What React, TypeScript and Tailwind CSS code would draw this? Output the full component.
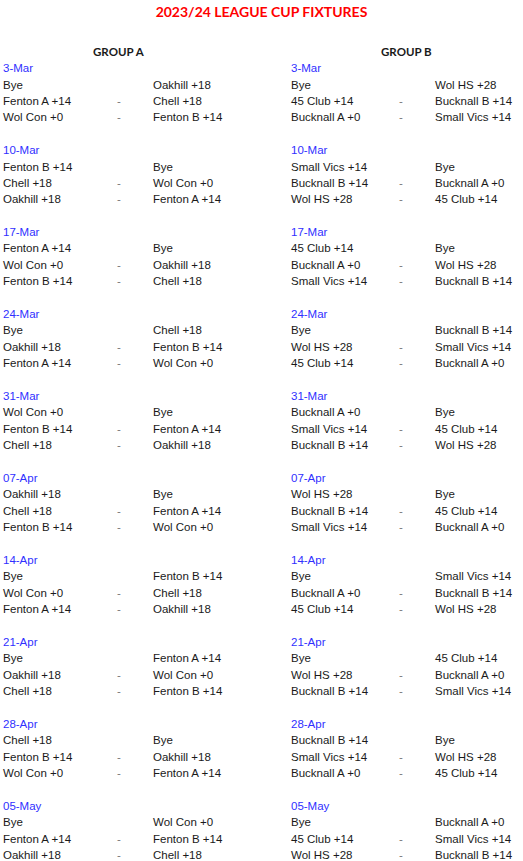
type Fixture = [string, string, string];
type Block = { date: string; rows: Fixture[] };

const groupA: Block[] = [
  { date: "3-Mar", rows: [["Bye", "", "Oakhill +18"], ["Fenton A +14", "-", "Chell +18"], ["Wol Con +0", "-", "Fenton B +14"]] },
  { date: "10-Mar", rows: [["Fenton B +14", "", "Bye"], ["Chell +18", "-", "Wol Con +0"], ["Oakhill +18", "-", "Fenton A +14"]] },
  { date: "17-Mar", rows: [["Fenton A +14", "", "Bye"], ["Wol Con +0", "-", "Oakhill +18"], ["Fenton B +14", "-", "Chell +18"]] },
  { date: "24-Mar", rows: [["Bye", "", "Chell +18"], ["Oakhill +18", "-", "Fenton B +14"], ["Fenton A +14", "-", "Wol Con +0"]] },
  { date: "31-Mar", rows: [["Wol Con +0", "", "Bye"], ["Fenton B +14", "-", "Fenton A +14"], ["Chell +18", "-", "Oakhill +18"]] },
  { date: "07-Apr", rows: [["Oakhill +18", "", "Bye"], ["Chell +18", "-", "Fenton A +14"], ["Fenton B +14", "-", "Wol Con +0"]] },
  { date: "14-Apr", rows: [["Bye", "", "Fenton B +14"], ["Wol Con +0", "-", "Chell +18"], ["Fenton A +14", "-", "Oakhill +18"]] },
  { date: "21-Apr", rows: [["Bye", "", "Fenton A +14"], ["Oakhill +18", "-", "Wol Con +0"], ["Chell +18", "-", "Fenton B +14"]] },
  { date: "28-Apr", rows: [["Chell +18", "", "Bye"], ["Fenton B +14", "-", "Oakhill +18"], ["Wol Con +0", "-", "Fenton A +14"]] },
  { date: "05-May", rows: [["Bye", "", "Wol Con +0"], ["Fenton A +14", "-", "Fenton B +14"], ["Oakhill +18", "-", "Chell +18"]] },
];

const groupB: Block[] = [
  { date: "3-Mar", rows: [["Bye", "", "Wol HS +28"], ["45 Club +14", "-", "Bucknall B +14"], ["Bucknall A +0", "-", "Small Vics +14"]] },
  { date: "10-Mar", rows: [["Small Vics +14", "", "Bye"], ["Bucknall B +14", "-", "Bucknall A +0"], ["Wol HS +28", "-", "45 Club +14"]] },
  { date: "17-Mar", rows: [["45 Club +14", "", "Bye"], ["Bucknall A +0", "-", "Wol HS +28"], ["Small Vics +14", "-", "Bucknall B +14"]] },
  { date: "24-Mar", rows: [["Bye", "", "Bucknall B +14"], ["Wol HS +28", "-", "Small Vics +14"], ["45 Club +14", "-", "Bucknall A +0"]] },
  { date: "31-Mar", rows: [["Bucknall A +0", "", "Bye"], ["Small Vics +14", "-", "45 Club +14"], ["Bucknall B +14", "-", "Wol HS +28"]] },
  { date: "07-Apr", rows: [["Wol HS +28", "", "Bye"], ["Bucknall B +14", "-", "45 Club +14"], ["Small Vics +14", "-", "Bucknall A +0"]] },
  { date: "14-Apr", rows: [["Bye", "", "Small Vics +14"], ["Bucknall A +0", "-", "Bucknall B +14"], ["45 Club +14", "-", "Wol HS +28"]] },
  { date: "21-Apr", rows: [["Bye", "", "45 Club +14"], ["Wol HS +28", "-", "Bucknall A +0"], ["Bucknall B +14", "-", "Small Vics +14"]] },
  { date: "28-Apr", rows: [["Bucknall B +14", "", "Bye"], ["Small Vics +14", "-", "Wol HS +28"], ["Bucknall A +0", "-", "45 Club +14"]] },
  { date: "05-May", rows: [["Bye", "", "Bucknall A +0"], ["45 Club +14", "-", "Small Vics +14"], ["Wol HS +28", "-", "Bucknall B +14"]] },
];

function Group({ title, blocks, cols }: { title: string; blocks: Block[]; cols: string }) {
  return (
    <div className="flex flex-col">
      <div className="h-[16.4px] pl-[90px] font-['Lato',sans-serif] text-[11.5px] font-bold leading-[16.4px] text-[#1a1a1a]">
        {title}
      </div>
      {blocks.map((b) => (
        <div key={b.date} className="flex flex-col">
          <div className="h-[16.4px] leading-[16.4px] text-[#3030ff]">{b.date}</div>
          {b.rows.map((r, i) => (
            <div key={i} className={`grid h-[16.4px] leading-[16.4px] ${cols}`}>
              <span className="whitespace-nowrap">{r[0]}</span>
              <span className="text-[#777]">{r[1]}</span>
              <span className="whitespace-nowrap">{r[2]}</span>
            </div>
          ))}
          <div className="h-[16.4px]" />
        </div>
      ))}
    </div>
  );
}

export default function App() {
  return (
    <div className="min-h-screen w-[523px] overflow-hidden bg-white font-['Liberation_Sans',Arial,sans-serif] text-[11.5px] text-[#1a1a1a]">
      <div className="h-[24px] text-center font-['Lato',sans-serif] text-[14px] font-bold leading-[24px] text-[#ff0000]">
        2023/24 LEAGUE CUP FIXTURES
      </div>
      <div className="h-[19.8px]" />
      <div className="flex">
        <div className="w-[288px] pl-[3px]">
          <Group title="GROUP A" blocks={groupA} cols="grid-cols-[114px_36px_1fr]" />
        </div>
        <div className="flex-1 pl-[3px]">
          <Group title="GROUP B" blocks={groupB} cols="grid-cols-[108px_36px_1fr]" />
        </div>
      </div>
    </div>
  );
}
